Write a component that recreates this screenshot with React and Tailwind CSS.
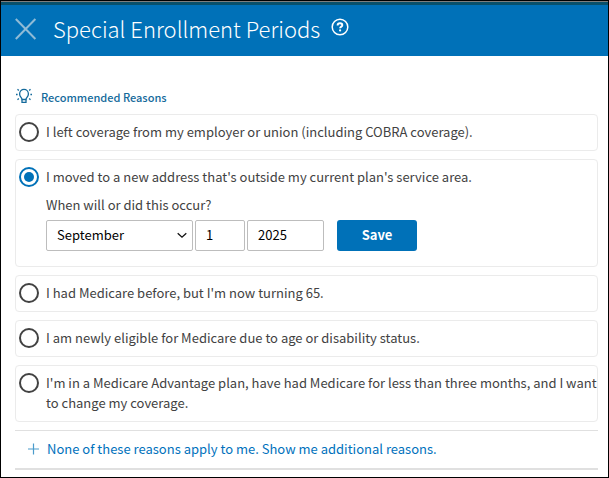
import React, { useState } from "react";

const reasons = [
  {
    id: "left-coverage",
    text: "I left coverage from my employer or union (including COBRA coverage).",
  },
  {
    id: "moved",
    text: "I moved to a new address that's outside my current plan's service area.",
    needsDate: true,
  },
  {
    id: "turning-65",
    text: "I had Medicare before, but I'm now turning 65.",
  },
  {
    id: "newly-eligible",
    text: "I am newly eligible for Medicare due to age or disability status.",
  },
  {
    id: "advantage-plan",
    text: "I'm in a Medicare Advantage plan, have had Medicare for less than three months, and I want to change my coverage.",
  },
];

const months = [
  "January",
  "February",
  "March",
  "April",
  "May",
  "June",
  "July",
  "August",
  "September",
  "October",
  "November",
  "December",
];

const App = () => {
  const [selected, setSelected] = useState("moved");

  return (
    <div className="border border-black bg-white font-['Noto_Sans_CJK_SC',sans-serif] text-[13px] leading-5 text-[#424242]">
      <Header />

      <main className="pl-[14px] pr-[10px] pt-8 pb-[7px]">
        <h2 className="flex items-center gap-2 mb-2 text-[11px] leading-[18px] font-medium text-[#146a9b]">
          <BulbIcon />
          Recommended Reasons
        </h2>

        <div className="flex flex-col gap-2">
          {reasons.map((reason) => (
            <ReasonCard
              key={reason.id}
              reason={reason}
              checked={selected === reason.id}
              onSelect={() => setSelected(reason.id)}
            />
          ))}
        </div>

        <div className="mt-2 border-t border-b-2 border-[#e0e0e0] pl-[13px] pt-2 pb-[9px]">
          <button
            type="button"
            className="flex items-center gap-[7px] text-[#0071bc]"
          >
            <PlusIcon />
            None of these reasons apply to me. Show me additional reasons.
          </button>
        </div>
      </main>
    </div>
  );
};

// Helper Components
const Header = () => (
  <header className="border-t border-[#7d7d7d] bg-[#0071b8]">
    <div className="border-t-3 border-[#08506b]">
      <div className="flex items-center h-[51px] pl-[14px] pb-[3px]">
        <button type="button" aria-label="Close">
          <svg
            className="w-[22px] h-[22px]"
            viewBox="0 0 22 22"
            fill="none"
            stroke="#8fbbd6"
            strokeWidth="2"
          >
            <path d="M0.800 1l19.600 20M20.400 1L0.800 21" />
          </svg>
        </button>
        <h1 className="ml-4 mb-0.5 text-[22px] leading-8 font-light text-white">
          Special Enrollment Periods
        </h1>
        <button type="button" aria-label="Help" className="ml-[11px] mb-1">
          <HelpIcon />
        </button>
      </div>
    </div>
  </header>
);

const ReasonCard = ({ reason, checked, onSelect }) => (
  <div className="rounded border border-[#ebebeb] pt-[7px] pb-2 pl-[3px]">
    <div className="flex items-start gap-[7px]">
      <input
        type="radio"
        id={reason.id}
        name="reason"
        checked={checked}
        onChange={onSelect}
        className="shrink-0 w-5 h-5 appearance-none rounded-full border-2 border-[#424242] bg-white bg-clip-content p-[3px] checked:border-[#0071b8] checked:bg-[#0071b8]"
      />
      <label htmlFor={reason.id}>{reason.text}</label>
    </div>
    {reason.needsDate && checked && <DateFields />}
  </div>
);

const DateFields = () => (
  <fieldset className="mt-2 mb-[7px] pl-[27px]">
    <legend>When will or did this occur?</legend>
    <div className="flex items-center gap-[2px] mt-[5px] text-black">
      <div className="relative">
        <select
          aria-label="Month"
          defaultValue="September"
          className="w-[147px] h-[31px] appearance-none rounded-xs border border-[#bdbdbd] bg-white pl-[10px] pb-[2px]"
        >
          {months.map((month) => (
            <option key={month} value={month}>
              {month}
            </option>
          ))}
        </select>
        <svg
          className="pointer-events-none absolute right-[6px] top-[10px] w-[10px] h-[10px]"
          viewBox="0 0 10 10"
          fill="none"
          stroke="#111111"
          strokeWidth="1.3"
        >
          <path d="M0.700 3.200L5 7.200l4.300-4" />
        </svg>
      </div>
      <input
        type="text"
        aria-label="Day"
        defaultValue="1"
        className="w-[50px] h-[31px] rounded-xs border border-[#bdbdbd] pl-[10px] pb-[2px]"
      />
      <input
        type="text"
        aria-label="Year"
        defaultValue="2025"
        className="w-[77px] h-[31px] rounded-xs border border-[#bdbdbd] pl-[10px] pb-[2px]"
      />
      <button
        type="button"
        className="ml-[11px] w-20 h-[31px] rounded-[3px] bg-[#0071b8] pb-[2px] font-bold text-white"
      >
        Save
      </button>
    </div>
  </fieldset>
);

const HelpIcon = () => (
  <svg className="w-[18px] h-[18px]" viewBox="0 0 18 18" fill="none" stroke="#ffffff">
    <circle cx="9" cy="9" r="7.800" strokeWidth="1.500" />
    <path d="M6.6 7.4c0-1.400 1-2.100 2.400-2.100s2.300.8 2.300 1.900c0 1.500-2.200 1.400-2.200 3.100" strokeWidth="1.900" />
    <circle cx="9.100" cy="12.400" r="1.100" fill="#ffffff" stroke="none" />
  </svg>
);

const BulbIcon = () => (
  <svg
    className="w-[18px] h-[18px]"
    viewBox="0 0 18 18"
    fill="none"
    stroke="#146a9b"
    strokeWidth="1.3"
  >
    <path d="M7 11.500c0-1.800-2.400-2.600-2.400-5.600C4.600 3.200 6.600 1.400 9 1.400s4.400 1.800 4.400 4.500c0 3-2.400 3.800-2.400 5.600z" />
    <path d="M7 11.500v2.900h4v-2.900" />
    <path d="M1 6.500h1.600M15.400 6.500H17M2.500 1.200l1.300 1.200M15.500 1.200l-1.300 1.200M2.500 11.800l1.300-1.200M15.500 11.800l-1.300-1.200" />
  </svg>
);

const PlusIcon = () => (
  <svg
    className="w-3 h-3"
    viewBox="0 0 12 12"
    fill="none"
    stroke="#4a9bcb"
    strokeWidth="1.2"
  >
    <path d="M5.500 0.500v11M0 6h11" />
  </svg>
);

export default App;
